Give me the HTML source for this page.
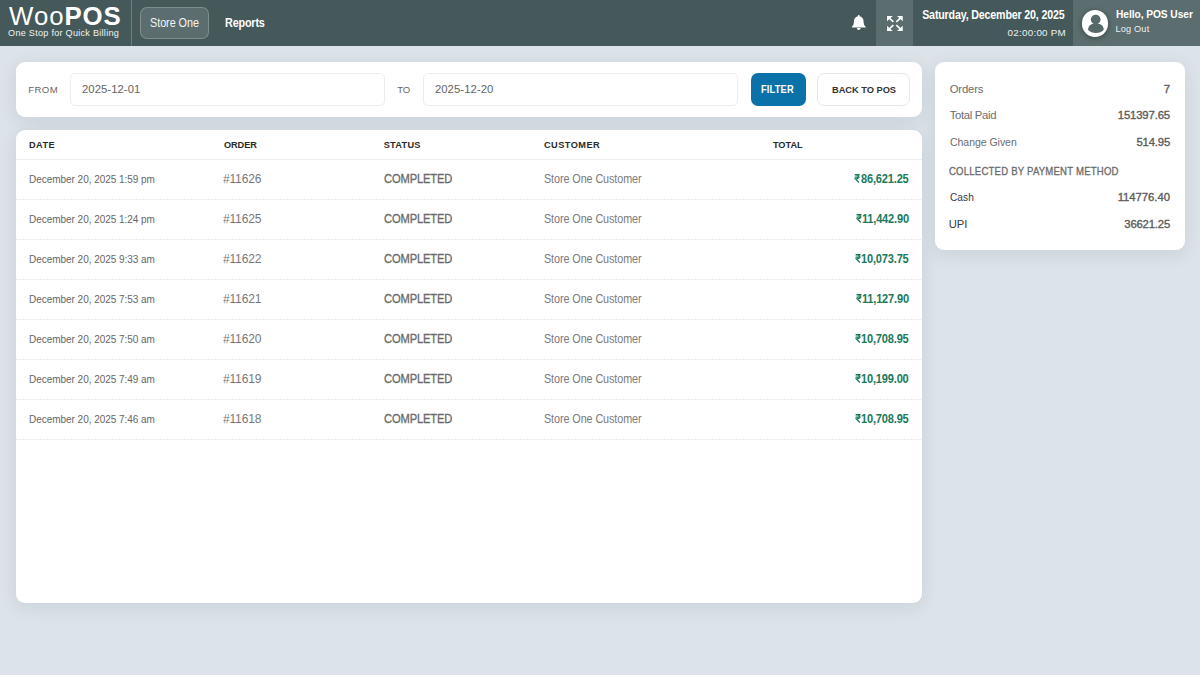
<!DOCTYPE html>
<html><head><meta charset="utf-8"><style>
html,body{margin:0;padding:0}
body{width:1200px;height:675px;overflow:hidden;position:relative;background:#dce3e9;font-family:"Liberation Sans",sans-serif}
.t{position:absolute;white-space:nowrap;line-height:1}
.hdr{position:absolute;left:0;top:0;width:1200px;height:46px;background:#45595a}
.card{position:absolute;background:#fff;border-radius:9px;box-shadow:0 4px 18px rgba(40,60,80,0.10)}
.inp{position:absolute;top:73px;height:31px;width:313px;border:1px solid #ebedee;border-radius:5px;background:#fff}
.dash{position:absolute;left:16px;width:906px;height:1px;background:repeating-linear-gradient(90deg,#e8e9ea 0 2px,transparent 2px 3px)}
</style></head><body>
<div class="hdr"></div>
<div style="position:absolute;left:131px;top:0;width:1px;height:46px;background:rgba(255,255,255,0.22)"></div>
<div style="position:absolute;left:140px;top:7px;width:67px;height:30px;border:1px solid rgba(255,255,255,0.22);border-radius:7px;background:rgba(255,255,255,0.12)"></div>
<div style="position:absolute;left:876px;top:0;width:37px;height:46px;background:rgba(255,255,255,0.12)"></div>
<div style="position:absolute;left:1073px;top:0;width:127px;height:46px;background:rgba(255,255,255,0.12)"></div>
<svg style="position:absolute;left:848px;top:12px" width="22" height="22" viewBox="0 0 22 22"><path d="M10.75 3.1C11.3 3.1 11.7 3.6 11.7 4.2C14.3 4.8 15.6 6.9 15.6 9.6C15.6 12.4 16.3 13.6 17.6 14.7C17.95 15 17.75 15.6 17.3 15.6H4.2C3.75 15.6 3.55 15 3.9 14.7C5.2 13.6 5.9 12.4 5.9 9.6C5.9 6.9 7.2 4.8 9.8 4.2C9.8 3.6 10.2 3.1 10.75 3.1Z M8.9 15.9H12.6C12.6 17.1 11.8 17.9 10.75 17.9C9.7 17.9 8.9 17.1 8.9 15.9Z" fill="#fff"/></svg>
<svg style="position:absolute;left:887.3px;top:15.9px;overflow:visible" width="16" height="15" viewBox="0 0 16 15"><path fill="#fff" d="M0 0H5.7L0 5.3Z M15.7 0H10L15.7 5.3Z M0 15H5.7L0 9.7Z M15.7 15H10L15.7 9.7Z"/><path stroke="#fff" stroke-width="1.6" d="M1.5 1.4L6.4 5.9M14.2 1.4L9.3 5.9M1.5 13.6L6.4 9.1M14.2 13.6L9.3 9.1"/></svg>
<div style="position:absolute;left:1081.6px;top:10.3px;width:26.8px;height:26.8px;border-radius:50%;background:#fff;box-shadow:0 1px 5px rgba(0,0,0,0.4)"></div>
<svg style="position:absolute;left:1081.5px;top:10px" width="27" height="27" viewBox="0 0 27 27"><circle cx="13.7" cy="9.6" r="4.85" fill="#55686a"/><path d="M6.1 20C6.1 16.4 8.4 14.1 11 14.1H16.8C19.4 14.1 21.7 16.4 21.7 20C19.8 22 17 23 13.9 23C10.8 23 8 22 6.1 20Z" fill="#55686a"/></svg>
<div class="card" style="left:16px;top:62px;width:906px;height:55px"></div>
<div class="inp" style="left:69.5px"></div>
<div class="inp" style="left:423px"></div>
<div style="position:absolute;left:751px;top:73px;width:55px;height:33px;border-radius:7px;background:#0a72a9"></div>
<div style="position:absolute;left:817px;top:73px;width:91px;height:31px;border:1px solid #e6e8ea;border-radius:7px;background:#fff"></div>
<div class="card" style="left:16px;top:130px;width:906px;height:473px"></div>
<div style="position:absolute;left:16px;top:159px;width:906px;height:1px;background:#eceeef"></div>
<div class="dash" style="top:199px"></div><div class="dash" style="top:239px"></div><div class="dash" style="top:279px"></div><div class="dash" style="top:319px"></div><div class="dash" style="top:359px"></div><div class="dash" style="top:399px"></div><div class="dash" style="top:439px"></div>
<div class="card" style="left:935px;top:62px;width:249.5px;height:187.5px"></div>
<div class="t" id="logo" style="top:3.65px;font-size:25.8px;color:#ffffff;letter-spacing:0.920px;left:9.10px;">Woo<b>POS</b></div><div class="t" id="logo_t" style="top:29.09px;font-size:9.1px;color:#f2f4f4;letter-spacing:0.264px;left:8.10px;">One Stop for Quick Billing</div><div class="t" id="store" style="top:16.74px;font-size:12px;color:#f4f6f6;letter-spacing:-0.038px;transform:scaleX(0.9);transform-origin:left center;left:149.90px;">Store One</div><div class="t" id="reports" style="top:16.74px;font-size:12px;color:#ffffff;font-weight:bold;letter-spacing:-0.182px;transform:scaleX(0.9);transform-origin:left center;left:224.80px;">Reports</div><div class="t" id="date" style="top:9.30px;font-size:12.4px;color:#ffffff;font-weight:bold;letter-spacing:-0.189px;transform:scaleX(0.86);transform-origin:right center;right:136.00px;">Saturday, December 20, 2025</div><div class="t" id="time" style="top:27.50px;font-size:9.8px;color:#eef1f1;letter-spacing:0.260px;right:134.00px;">02:00:00 PM</div><div class="t" id="hello" style="top:7.77px;font-size:11.6px;color:#ffffff;font-weight:bold;letter-spacing:-0.067px;transform:scaleX(0.88);transform-origin:left center;left:1115.50px;">Hello, POS User</div><div class="t" id="logout" style="top:25.21px;font-size:9.2px;color:#eef1f1;letter-spacing:0.167px;left:1115.50px;">Log Out</div><div class="t" id="from" style="top:84.87px;font-size:9.6px;color:#666;letter-spacing:0.404px;left:28.20px;">FROM</div><div class="t" id="in1" style="top:83.53px;font-size:11.3px;color:#636363;letter-spacing:0.051px;left:82.00px;">2025-12-01</div><div class="t" id="to" style="top:84.87px;font-size:9.6px;color:#666;letter-spacing:-0.200px;left:397.30px;">TO</div><div class="t" id="in2" style="top:83.53px;font-size:11.3px;color:#636363;letter-spacing:0.080px;left:434.90px;">2025-12-20</div><div class="t" id="filter" style="top:84.83px;font-size:10px;color:#ffffff;font-weight:bold;letter-spacing:0.164px;transform:scaleX(0.93);transform-origin:left center;left:761.00px;">FILTER</div><div class="t" id="back" style="top:85.00px;font-size:9.8px;color:#333;font-weight:bold;letter-spacing:-0.043px;transform:scaleX(0.95);transform-origin:left center;left:831.80px;">BACK TO POS</div><div class="t" id="h_date" style="top:141.41px;font-size:9.2px;color:#2a2a2a;font-weight:bold;letter-spacing:0.467px;left:28.90px;">DATE</div><div class="t" id="h_order" style="top:141.41px;font-size:9.2px;color:#2a2a2a;font-weight:bold;letter-spacing:-0.050px;left:223.90px;">ORDER</div><div class="t" id="h_status" style="top:141.41px;font-size:9.2px;color:#2a2a2a;font-weight:bold;letter-spacing:0.267px;left:383.70px;">STATUS</div><div class="t" id="h_cust" style="top:141.41px;font-size:9.2px;color:#2a2a2a;font-weight:bold;letter-spacing:0.467px;left:544.00px;">CUSTOMER</div><div class="t" id="h_total" style="top:141.41px;font-size:9.2px;color:#2a2a2a;font-weight:bold;left:772.90px;">TOTAL</div><div class="t" id="r0_date" style="top:175.43px;font-size:10px;color:#666;letter-spacing:-0.033px;left:29.00px;">December 20, 2025 1:59 pm</div><div class="t" id="r0_order" style="top:172.84px;font-size:12px;color:#777;letter-spacing:-0.120px;left:222.90px;">#11626</div><div class="t" id="r0_status" style="top:172.84px;font-size:12px;color:#6a6a6a;letter-spacing:-0.139px;-webkit-text-stroke:0.3px #6a6a6a;transform:scaleX(0.93);transform-origin:left center;left:383.70px;">COMPLETED</div><div class="t" id="r0_cust" style="top:172.84px;font-size:12px;color:#7a7a7a;letter-spacing:-0.092px;transform:scaleX(0.9);transform-origin:left center;left:544.00px;">Store One Customer</div><div class="t" id="r0_total" style="top:172.84px;font-size:12px;color:#1b7a5c;font-weight:bold;letter-spacing:-0.174px;transform:scaleX(0.92);transform-origin:right center;right:291.00px;"><svg width="5.4" height="8.8" viewBox="0 0 10 16.3" style="margin-right:1.4px;vertical-align:baseline;overflow:visible"><path d="M0 1.3H10M0 5.7H10M1.2 1.3Q7.6 1.3 7.6 5.4Q7.6 9.2 1.6 9.2L8.6 15.6" fill="none" stroke="#1b7a5c" stroke-width="2.6"/></svg>86,621.25</div><div class="t" id="r1_date" style="top:215.43px;font-size:10px;color:#666;letter-spacing:-0.033px;left:29.00px;">December 20, 2025 1:24 pm</div><div class="t" id="r1_order" style="top:212.84px;font-size:12px;color:#777;letter-spacing:-0.120px;left:222.90px;">#11625</div><div class="t" id="r1_status" style="top:212.84px;font-size:12px;color:#6a6a6a;letter-spacing:-0.139px;-webkit-text-stroke:0.3px #6a6a6a;transform:scaleX(0.93);transform-origin:left center;left:383.70px;">COMPLETED</div><div class="t" id="r1_cust" style="top:212.84px;font-size:12px;color:#7a7a7a;letter-spacing:-0.092px;transform:scaleX(0.9);transform-origin:left center;left:544.00px;">Store One Customer</div><div class="t" id="r1_total" style="top:212.84px;font-size:12px;color:#1b7a5c;font-weight:bold;letter-spacing:-0.174px;transform:scaleX(0.92);transform-origin:right center;right:291.00px;"><svg width="5.4" height="8.8" viewBox="0 0 10 16.3" style="margin-right:0.4px;vertical-align:baseline;overflow:visible"><path d="M0 1.3H10M0 5.7H10M1.2 1.3Q7.6 1.3 7.6 5.4Q7.6 9.2 1.6 9.2L8.6 15.6" fill="none" stroke="#1b7a5c" stroke-width="2.6"/></svg>11,442.90</div><div class="t" id="r2_date" style="top:255.43px;font-size:10px;color:#666;letter-spacing:-0.033px;left:29.00px;">December 20, 2025 9:33 am</div><div class="t" id="r2_order" style="top:252.84px;font-size:12px;color:#777;letter-spacing:-0.120px;left:222.90px;">#11622</div><div class="t" id="r2_status" style="top:252.84px;font-size:12px;color:#6a6a6a;letter-spacing:-0.139px;-webkit-text-stroke:0.3px #6a6a6a;transform:scaleX(0.93);transform-origin:left center;left:383.70px;">COMPLETED</div><div class="t" id="r2_cust" style="top:252.84px;font-size:12px;color:#7a7a7a;letter-spacing:-0.092px;transform:scaleX(0.9);transform-origin:left center;left:544.00px;">Store One Customer</div><div class="t" id="r2_total" style="top:252.84px;font-size:12px;color:#1b7a5c;font-weight:bold;letter-spacing:-0.174px;transform:scaleX(0.92);transform-origin:right center;right:291.00px;"><svg width="5.4" height="8.8" viewBox="0 0 10 16.3" style="margin-right:0.4px;vertical-align:baseline;overflow:visible"><path d="M0 1.3H10M0 5.7H10M1.2 1.3Q7.6 1.3 7.6 5.4Q7.6 9.2 1.6 9.2L8.6 15.6" fill="none" stroke="#1b7a5c" stroke-width="2.6"/></svg>10,073.75</div><div class="t" id="r3_date" style="top:295.43px;font-size:10px;color:#666;letter-spacing:-0.033px;left:29.00px;">December 20, 2025 7:53 am</div><div class="t" id="r3_order" style="top:292.84px;font-size:12px;color:#777;letter-spacing:-0.120px;left:222.90px;">#11621</div><div class="t" id="r3_status" style="top:292.84px;font-size:12px;color:#6a6a6a;letter-spacing:-0.139px;-webkit-text-stroke:0.3px #6a6a6a;transform:scaleX(0.93);transform-origin:left center;left:383.70px;">COMPLETED</div><div class="t" id="r3_cust" style="top:292.84px;font-size:12px;color:#7a7a7a;letter-spacing:-0.092px;transform:scaleX(0.9);transform-origin:left center;left:544.00px;">Store One Customer</div><div class="t" id="r3_total" style="top:292.84px;font-size:12px;color:#1b7a5c;font-weight:bold;letter-spacing:-0.174px;transform:scaleX(0.92);transform-origin:right center;right:291.00px;"><svg width="5.4" height="8.8" viewBox="0 0 10 16.3" style="margin-right:0.4px;vertical-align:baseline;overflow:visible"><path d="M0 1.3H10M0 5.7H10M1.2 1.3Q7.6 1.3 7.6 5.4Q7.6 9.2 1.6 9.2L8.6 15.6" fill="none" stroke="#1b7a5c" stroke-width="2.6"/></svg>11,127.90</div><div class="t" id="r4_date" style="top:335.43px;font-size:10px;color:#666;letter-spacing:-0.033px;left:29.00px;">December 20, 2025 7:50 am</div><div class="t" id="r4_order" style="top:332.84px;font-size:12px;color:#777;letter-spacing:-0.120px;left:222.90px;">#11620</div><div class="t" id="r4_status" style="top:332.84px;font-size:12px;color:#6a6a6a;letter-spacing:-0.139px;-webkit-text-stroke:0.3px #6a6a6a;transform:scaleX(0.93);transform-origin:left center;left:383.70px;">COMPLETED</div><div class="t" id="r4_cust" style="top:332.84px;font-size:12px;color:#7a7a7a;letter-spacing:-0.092px;transform:scaleX(0.9);transform-origin:left center;left:544.00px;">Store One Customer</div><div class="t" id="r4_total" style="top:332.84px;font-size:12px;color:#1b7a5c;font-weight:bold;letter-spacing:-0.174px;transform:scaleX(0.92);transform-origin:right center;right:291.00px;"><svg width="5.4" height="8.8" viewBox="0 0 10 16.3" style="margin-right:0.4px;vertical-align:baseline;overflow:visible"><path d="M0 1.3H10M0 5.7H10M1.2 1.3Q7.6 1.3 7.6 5.4Q7.6 9.2 1.6 9.2L8.6 15.6" fill="none" stroke="#1b7a5c" stroke-width="2.6"/></svg>10,708.95</div><div class="t" id="r5_date" style="top:375.43px;font-size:10px;color:#666;letter-spacing:-0.033px;left:29.00px;">December 20, 2025 7:49 am</div><div class="t" id="r5_order" style="top:372.84px;font-size:12px;color:#777;letter-spacing:-0.120px;left:222.90px;">#11619</div><div class="t" id="r5_status" style="top:372.84px;font-size:12px;color:#6a6a6a;letter-spacing:-0.139px;-webkit-text-stroke:0.3px #6a6a6a;transform:scaleX(0.93);transform-origin:left center;left:383.70px;">COMPLETED</div><div class="t" id="r5_cust" style="top:372.84px;font-size:12px;color:#7a7a7a;letter-spacing:-0.092px;transform:scaleX(0.9);transform-origin:left center;left:544.00px;">Store One Customer</div><div class="t" id="r5_total" style="top:372.84px;font-size:12px;color:#1b7a5c;font-weight:bold;letter-spacing:-0.174px;transform:scaleX(0.92);transform-origin:right center;right:291.00px;"><svg width="5.4" height="8.8" viewBox="0 0 10 16.3" style="margin-right:0.4px;vertical-align:baseline;overflow:visible"><path d="M0 1.3H10M0 5.7H10M1.2 1.3Q7.6 1.3 7.6 5.4Q7.6 9.2 1.6 9.2L8.6 15.6" fill="none" stroke="#1b7a5c" stroke-width="2.6"/></svg>10,199.00</div><div class="t" id="r6_date" style="top:415.43px;font-size:10px;color:#666;letter-spacing:-0.033px;left:29.00px;">December 20, 2025 7:46 am</div><div class="t" id="r6_order" style="top:412.84px;font-size:12px;color:#777;letter-spacing:-0.120px;left:222.90px;">#11618</div><div class="t" id="r6_status" style="top:412.84px;font-size:12px;color:#6a6a6a;letter-spacing:-0.139px;-webkit-text-stroke:0.3px #6a6a6a;transform:scaleX(0.93);transform-origin:left center;left:383.70px;">COMPLETED</div><div class="t" id="r6_cust" style="top:412.84px;font-size:12px;color:#7a7a7a;letter-spacing:-0.092px;transform:scaleX(0.9);transform-origin:left center;left:544.00px;">Store One Customer</div><div class="t" id="r6_total" style="top:412.84px;font-size:12px;color:#1b7a5c;font-weight:bold;letter-spacing:-0.174px;transform:scaleX(0.92);transform-origin:right center;right:291.00px;"><svg width="5.4" height="8.8" viewBox="0 0 10 16.3" style="margin-right:0.4px;vertical-align:baseline;overflow:visible"><path d="M0 1.3H10M0 5.7H10M1.2 1.3Q7.6 1.3 7.6 5.4Q7.6 9.2 1.6 9.2L8.6 15.6" fill="none" stroke="#1b7a5c" stroke-width="2.6"/></svg>10,708.95</div><div class="t" id="s_orders" style="top:84.03px;font-size:11.3px;color:#6b6b6b;letter-spacing:-0.160px;left:949.70px;">Orders</div><div class="t" id="s_orders_v" style="top:84.03px;font-size:11.3px;color:#5a5a5a;-webkit-text-stroke:0.35px #5a5a5a;right:30.00px;">7</div><div class="t" id="s_paid" style="top:109.63px;font-size:11.3px;color:#6b6b6b;letter-spacing:-0.313px;left:949.70px;">Total Paid</div><div class="t" id="s_paid_v" style="top:109.63px;font-size:11.3px;color:#5a5a5a;letter-spacing:-0.125px;-webkit-text-stroke:0.35px #5a5a5a;right:30.00px;">151397.65</div><div class="t" id="s_change" style="top:136.73px;font-size:11.3px;color:#6b6b6b;letter-spacing:-0.041px;transform:scaleX(0.93);transform-origin:left center;left:949.70px;">Change Given</div><div class="t" id="s_change_v" style="top:136.73px;font-size:11.3px;color:#5a5a5a;letter-spacing:-0.160px;-webkit-text-stroke:0.35px #5a5a5a;right:30.00px;">514.95</div><div class="t" id="s_coll" style="top:167.29px;font-size:10.4px;color:#6a6a6a;letter-spacing:0.229px;-webkit-text-stroke:0.3px #6a6a6a;transform:scaleX(0.92);transform-origin:left center;left:948.50px;">COLLECTED BY PAYMENT METHOD</div><div class="t" id="s_cash" style="top:192.23px;font-size:11.3px;color:#3a3a3a;letter-spacing:0.019px;transform:scaleX(0.9);transform-origin:left center;left:949.80px;">Cash</div><div class="t" id="s_cash_v" style="top:192.23px;font-size:11.3px;color:#5a5a5a;letter-spacing:-0.025px;-webkit-text-stroke:0.35px #5a5a5a;right:30.00px;">114776.40</div><div class="t" id="s_upi" style="top:219.13px;font-size:11.3px;color:#3a3a3a;letter-spacing:-0.100px;left:948.80px;">UPI</div><div class="t" id="s_upi_v" style="top:219.13px;font-size:11.3px;color:#5a5a5a;letter-spacing:-0.176px;-webkit-text-stroke:0.35px #5a5a5a;right:30.00px;">36621.25</div>
</body></html>
